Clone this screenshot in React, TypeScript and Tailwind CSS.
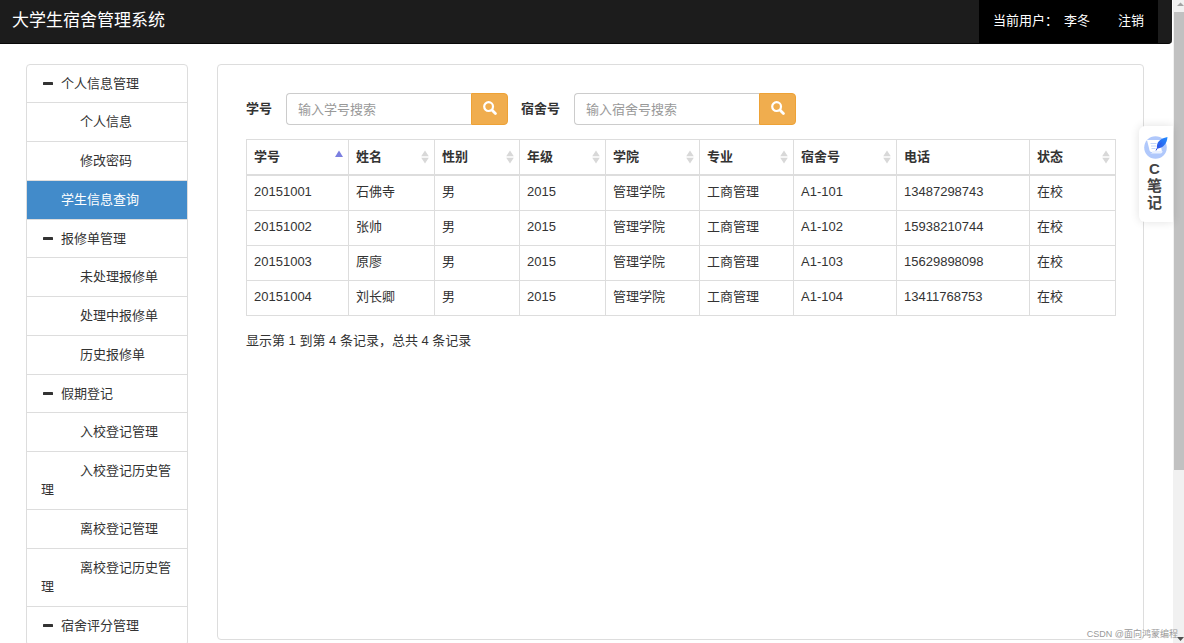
const menu = [
  {
    title: "个人信息管理",
    items: ["个人信息", "修改密码", "学生信息查询"],
  },
  {
    title: "报修单管理",
    items: ["未处理报修单", "处理中报修单", "历史报修单"],
  },
  {
    title: "假期登记",
    items: ["入校登记管理", "入校登记历史管理", "离校登记管理", "离校登记历史管理"],
  },
  { title: "宿舍评分管理", items: [] },
]

const activeItem = "学生信息查询"

const columns = [
  { label: "学号", width: 102, sort: "asc" },
  { label: "姓名", width: 86, sort: "both" },
  { label: "性别", width: 85, sort: "both" },
  { label: "年级", width: 86, sort: "both" },
  { label: "学院", width: 94, sort: "both" },
  { label: "专业", width: 94, sort: "both" },
  { label: "宿舍号", width: 103, sort: "both" },
  { label: "电话", width: 133, sort: "none" },
  { label: "状态", width: 86, sort: "both" },
]

const students = [
  ["20151001", "石佛寺", "男", "2015", "管理学院", "工商管理", "A1-101", "13487298743", "在校"],
  ["20151002", "张帅", "男", "2015", "管理学院", "工商管理", "A1-102", "15938210744", "在校"],
  ["20151003", "原廖", "男", "2015", "管理学院", "工商管理", "A1-103", "15629898098", "在校"],
  ["20151004", "刘长卿", "男", "2015", "管理学院", "工商管理", "A1-104", "13411768753", "在校"],
]

const SearchIcon = () => (
  <svg viewBox="0 0 14 14" className="h-[14px] w-[14px]" fill="none" stroke="currentColor" aria-hidden="true">
    <circle cx="5.6" cy="5.6" r="4.4" strokeWidth="2.2" />
    <path d="M9.2 9.2l3.2 3.2" strokeWidth="2.8" strokeLinecap="round" />
  </svg>
)

const SortIcon = ({ sort }: { sort: string }) => {
  if (sort === "none") return null
  return (
    <svg viewBox="0 0 8 14" className="h-[14px] w-[8px] shrink-0" aria-hidden="true">
      {sort === "asc" ? (
        <path d="M4 0.5L8 7H0z" fill="#7b7fe0" />
      ) : (
        <path d="M4 0.5L7.8 6.3H0.2zM4 13.5L0.2 7.7h7.6z" fill="#d8d8d8" />
      )}
    </svg>
  )
}

const Header = () => (
  <header className="flex h-11 items-stretch justify-between rounded-br border-b border-[#080808] bg-[#1c1c1c] pr-[14px] pl-3 text-white">
    <a href="#" className="flex items-center pb-[2px] text-[17px]">
      大学生宿舍管理系统
    </a>
    <nav className="flex bg-black">
      <a href="#" className="flex items-center gap-[6px] px-[14px] pb-[2px]">
        <span>当前用户：</span>
        <span>李冬</span>
      </a>
      <a href="#" className="flex items-center px-[14px] pb-[2px]">
        注销
      </a>
    </nav>
  </header>
)

const Sidebar = () => (
  <nav className="w-[162px] shrink-0 rounded border border-[#ddd] text-[#333]">
    {menu.map((group) => (
      <div key={group.title}>
        <button type="button" className="flex w-full items-center gap-2 border-b border-[#ddd] px-4 py-[9px] text-left">
          <svg viewBox="0 0 10 4" className="h-1 w-[10px]" aria-hidden="true">
            <rect width="10" height="3" rx="0.6" fill="#333" />
          </svg>
          {group.title}
        </button>
        {group.items.map((item) =>
          item === activeItem ? (
            <a
              key={item}
              href="#"
              aria-current="page"
              className="block border-b border-[#ddd] bg-[#428bca] px-[14px] pt-[9px] pb-[10px] indent-[20px] text-white"
            >
              {item}
            </a>
          ) : (
            <a key={item} href="#" className="block border-b border-[#ddd] px-[14px] pt-[9px] pb-[10px] indent-[39px]">
              {item}
            </a>
          )
        )}
      </div>
    ))}
  </nav>
)

const SearchField = ({ id, label, placeholder }: { id: string; label: string; placeholder: string }) => (
  <div className="flex items-center gap-[14px]">
    <label htmlFor={id} className="pb-[2px] font-bold">
      {label}
    </label>
    <div className="flex">
      <input
        id={id}
        type="text"
        placeholder={placeholder}
        className="h-8 w-[185px] rounded-l border border-r-0 border-[#ccc] bg-white px-[11px] outline-none placeholder:text-[#999]"
      />
      <button
        type="button"
        aria-label={`搜索${label}`}
        className="flex h-8 w-[37px] items-center justify-center rounded-r border border-[#eea236] bg-[#f0ad4e] pb-[2px] text-white"
      >
        <SearchIcon />
      </button>
    </div>
  </div>
)

const StudentTable = () => (
  <table className="mt-[14px] w-full table-fixed border-collapse border border-[#ddd] text-left leading-[18px]">
    <colgroup>
      {columns.map((col) => (
        <col key={col.label} style={{ width: col.width }} />
      ))}
    </colgroup>
    <thead>
      <tr>
        {columns.map((col) => (
          <th key={col.label} className="border border-b-2 border-[#ddd] py-2 pr-[5px] pl-[7px] font-bold">
            <div className="flex items-center justify-between">
              {col.label}
              <SortIcon sort={col.sort} />
            </div>
          </th>
        ))}
      </tr>
    </thead>
    <tbody>
      {students.map((row) => (
        <tr key={row[0]}>
          {row.map((cell, i) => (
            <td key={i} className="border border-[#ddd] px-[7px] pt-[7px] pb-[9px]">
              {cell}
            </td>
          ))}
        </tr>
      ))}
    </tbody>
  </table>
)

const Scrollbar = () => (
  <div className="ml-px flex w-[11px] shrink-0 flex-col bg-[#f1f1f1]" aria-hidden="true">
    <svg viewBox="0 0 11 12" className="h-3 w-[11px]">
      <path d="M7.5 2.5L11 6H4z" fill="#a3a3a3" />
    </svg>
    <div className="flex-1 pl-px">
      <div className="h-[74%] bg-[#c1c1c1]" />
    </div>
    <svg viewBox="0 0 11 12" className="h-3 w-[11px]">
      <path d="M4 6h7L7.5 10z" fill="#505050" />
    </svg>
  </div>
)

const NotesWidget = () => (
  <button
    type="button"
    className="absolute top-[126px] right-[11px] flex w-[34px] flex-col items-center rounded-l-md bg-white pt-[9px] pr-[3px] pb-[11px] text-[15px] leading-[17px] font-bold text-[#444] shadow-[0_0_10px_rgba(0,0,0,0.12)]"
  >
    <svg viewBox="0 0 24 24" className="mb-px ml-[2px] h-6 w-6" aria-hidden="true">
      <defs>
        <linearGradient id="feather" x1="1" y1="0" x2="0" y2="1">
          <stop offset="0" stopColor="#1f8bff" />
          <stop offset="1" stopColor="#2f55e8" />
        </linearGradient>
      </defs>
      <circle cx="11.5" cy="12.5" r="11.3" fill="#b0c8fb" />
      <path d="M3 5h13l2 12H8C5.500 17 5.500 15 5 13z" fill="#fff" />
      <path d="M6 18.500h10.500c1.500 0 2-1 2-2.500H8.500c0 1.500-1 2.500-2.500 2.500z" fill="#eaf1ff" />
      <path d="M6.500 8.500h6M7 11h5M7.500 13.500h4" stroke="#c4d6fb" strokeWidth="1" />
      <path d="M13 13.500C12 7.500 16 3.500 23.500 2c-.5 6.500-4 10.500-9.500 11.500z" fill="url(#feather)" />
      <path d="M12 15.500c1.500-3 3-5.500 5.500-7.500" stroke="#2f55e8" strokeWidth="1" fill="none" />
    </svg>
    <span>C</span>
    <span>笔</span>
    <span>记</span>
  </button>
)

export default function App() {
  return (
    <div className="relative flex h-screen overflow-hidden bg-white font-['Liberation_Sans','Noto_Sans_CJK_SC',sans-serif] text-[13px] leading-[19px] text-[#333]">
      <div className="min-w-0 flex-1">
        <Header />
        <div className="flex items-start gap-[29px] pt-5 pr-7 pl-[26px]">
          <Sidebar />
          <main className="min-h-144 min-w-0 flex-1 rounded border border-[#ddd] p-7">
            <form className="flex gap-[13px]">
              <SearchField id="student-no" label="学号" placeholder="输入学号搜索" />
              <SearchField id="dorm-no" label="宿舍号" placeholder="输入宿舍号搜索" />
            </form>
            <StudentTable />
            <p className="mt-[15px]">显示第 1 到第 4 条记录，总共 4 条记录</p>
          </main>
        </div>
      </div>
      <Scrollbar />
      <NotesWidget />
      <div className="absolute right-[6px] bottom-0 text-[9px] leading-[18px] text-[#999]">CSDN @面向鸿蒙编程</div>
    </div>
  )
}
